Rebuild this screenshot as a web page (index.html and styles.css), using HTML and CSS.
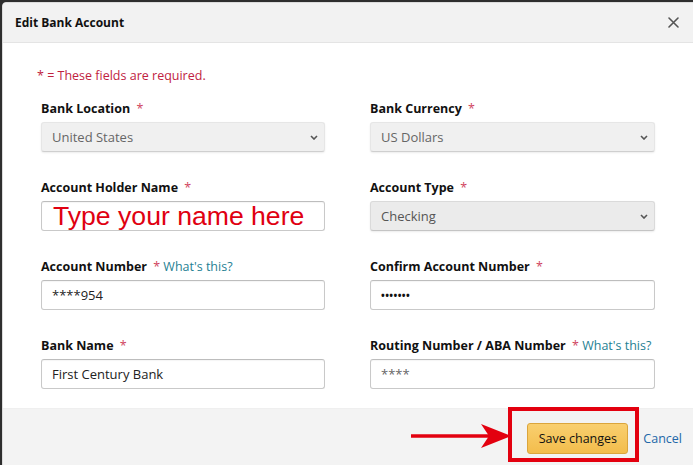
FILE: index.html
```html
<!DOCTYPE html>
<html lang="en">
<head>
<meta charset="utf-8">
<title>Edit Bank Account</title>
<link rel="stylesheet" href="styles.css">
</head>
<body>
<div class="page">
  <div class="modal">
    <header class="modal-header">
      <h1 class="title">Edit Bank Account</h1>
      <button class="close" aria-label="Close">
        <svg width="11" height="11" viewBox="0 0 11 11"><path d="M1 1L10 10M10 1L1 10" stroke="#555" stroke-width="1.6" stroke-linecap="round"/></svg>
      </button>
    </header>

    <main class="modal-body">
      <p class="req-note">* = These fields are required.</p>
      <div class="form-grid">
        <div class="field">
          <label class="label">Bank Location <span class="ast">*</span></label>
          <div class="select"><span>United States</span><svg class="chev" width="8" height="5" viewBox="0 0 8 5"><path d="M1 1L4 4L7 1" fill="none" stroke="#555" stroke-width="1.6"/></svg></div>
        </div>
        <div class="field">
          <label class="label">Bank Currency <span class="ast">*</span></label>
          <div class="select"><span>US Dollars</span><svg class="chev" width="8" height="5" viewBox="0 0 8 5"><path d="M1 1L4 4L7 1" fill="none" stroke="#555" stroke-width="1.6"/></svg></div>
        </div>

        <div class="field">
          <label class="label">Account Holder Name <span class="ast">*</span></label>
          <div class="input input-name">Type your name here</div>
        </div>
        <div class="field">
          <label class="label">Account Type <span class="ast">*</span></label>
          <div class="select select-dark"><span>Checking</span><svg class="chev" width="8" height="5" viewBox="0 0 8 5"><path d="M1 1L4 4L7 1" fill="none" stroke="#555" stroke-width="1.6"/></svg></div>
        </div>

        <div class="field">
          <label class="label">Account Number <span class="ast">*</span> <a class="help">What's this?</a></label>
          <div class="input">****954</div>
        </div>
        <div class="field">
          <label class="label">Confirm Account Number <span class="ast">*</span></label>
          <div class="input input-dots">&#8226;&#8226;&#8226;&#8226;&#8226;&#8226;&#8226;</div>
        </div>

        <div class="field">
          <label class="label">Bank Name <span class="ast">*</span></label>
          <div class="input">First Century Bank</div>
        </div>
        <div class="field">
          <label class="label">Routing Number / ABA Number <span class="ast">*</span> <a class="help">What's this?</a></label>
          <div class="input input-muted">****</div>
        </div>
      </div>
    </main>

    <footer class="modal-footer">
      <button class="btn-save">Save changes</button>
      <a class="cancel">Cancel</a>
      <div class="annot-box"></div>
      <svg class="annot-arrow" width="104" height="26" viewBox="0 0 104 26">
        <path d="M3 13H82" stroke="#e3000f" stroke-width="3.5"/>
        <polygon points="103,13 73,1 81,13 73,25" fill="#e3000f"/>
      </svg>
    </footer>
  </div>
</div>
</body>
</html>
```

FILE: styles.css
```css
* { box-sizing: border-box; }

html, body {
  margin: 0;
  padding: 0;
  background: #2e2e2e;
}

body {
  font-family: "Open Sans", "Noto Sans", Arial, sans-serif;
  color: #111;
}

.page {
  width: 693px;
  height: 465px;
  padding: 2px 0 0 2px;
  overflow: hidden;
}

.modal {
  width: 692px;
  height: 470px;
  background: #fff;
  border: 1px solid #dcdcdc;
  border-radius: 4px 0 0 0;
  display: flex;
  flex-direction: column;
  overflow: hidden;
}

.modal-header {
  height: 40px;
  flex: none;
  background: #f2f2f2;
  border-bottom: 1px solid #e4e4e4;
  display: flex;
  align-items: center;
  justify-content: space-between;
  padding: 0 14px 1px 12px;
}

.title {
  margin: 0;
  font-size: 12px;
  font-weight: 700;
  color: #111;
}

.close {
  border: 0;
  background: none;
  padding: 0;
  width: 11px;
  height: 11px;
  display: flex;
}

.modal-body {
  flex: none;
  height: 365px;
  padding: 25px 0 0 34px;
}

.req-note {
  margin: 0 0 17px 0;
  font-size: 12.5px;
  line-height: 16px;
  color: #c0223f;
}

.form-grid {
  margin-left: 4px;
  display: grid;
  grid-template-columns: 284px 285px;
  column-gap: 45px;
  row-gap: 28px;
}

.field {
  display: flex;
  flex-direction: column;
  gap: 5px;
}

.label {
  font-size: 12.5px;
  line-height: 16px;
  font-weight: 700;
  color: #111;
  white-space: nowrap;
}

.ast {
  color: #d0435e;
  font-weight: 400;
  margin-left: 3px;
}

.help {
  color: #1f7f93;
  font-weight: 400;
}

.select {
  height: 30px;
  background: #f0f0f0;
  border: 1px solid #e6e6e6;
  border-bottom-color: #cfcfcf;
  border-radius: 3px;
  box-shadow: 0 1px 2px rgba(0,0,0,0.08);
  display: flex;
  align-items: center;
  justify-content: space-between;
  padding: 0 6px 0 10px;
  font-size: 13px;
  color: #666;
}

.select-dark {
  background: #ebebeb;
  border-color: #dadada;
  border-bottom-color: #c4c4c4;
  color: #555;
}

.chev { display: block; }

.input {
  height: 30px;
  border: 1px solid #c9c9c9;
  border-top-color: #bdbdbd;
  border-radius: 3px;
  box-shadow: inset 0 1px 1px rgba(0,0,0,0.04);
  background: #fff;
  display: flex;
  align-items: center;
  padding: 0 10px;
  font-size: 13px;
  color: #222;
}

.input-name {
  font-family: "Liberation Sans", Arial, sans-serif;
  font-size: 26.6px;
  color: #e00011;
  padding-left: 11px;
  line-height: 1;
}

.input-dots {
  font-size: 10px;
  font-weight: 700;
  letter-spacing: 0.4px;
  color: #111;
}

.input-muted {
  color: #666;
}

.modal-footer {
  position: relative;
  flex: 1;
  background: #f3f3f3;
  border-top: 1px solid #efefef;
  display: flex;
  align-items: flex-start;
  justify-content: flex-end;
  gap: 15px;
  padding: 14px 11px 0 0;
}

.btn-save {
  width: 101px;
  height: 31px;
  border: 1px solid #dba53c;
  border-radius: 3px;
  background: linear-gradient(#f9cf6f, #f3bd4c);
  font-family: "Open Sans", "Noto Sans", Arial, sans-serif;
  font-size: 12.5px;
  color: #111;
  padding: 0;
}

.cancel {
  font-size: 12.5px;
  line-height: 31px;
  color: #2267a8;
}

.annot-box {
  position: absolute;
  left: 505px;
  top: -2px;
  width: 131px;
  height: 55px;
  border: 4px solid #e3000f;
}

.annot-arrow {
  position: absolute;
  left: 405px;
  top: 14px;
}
```
